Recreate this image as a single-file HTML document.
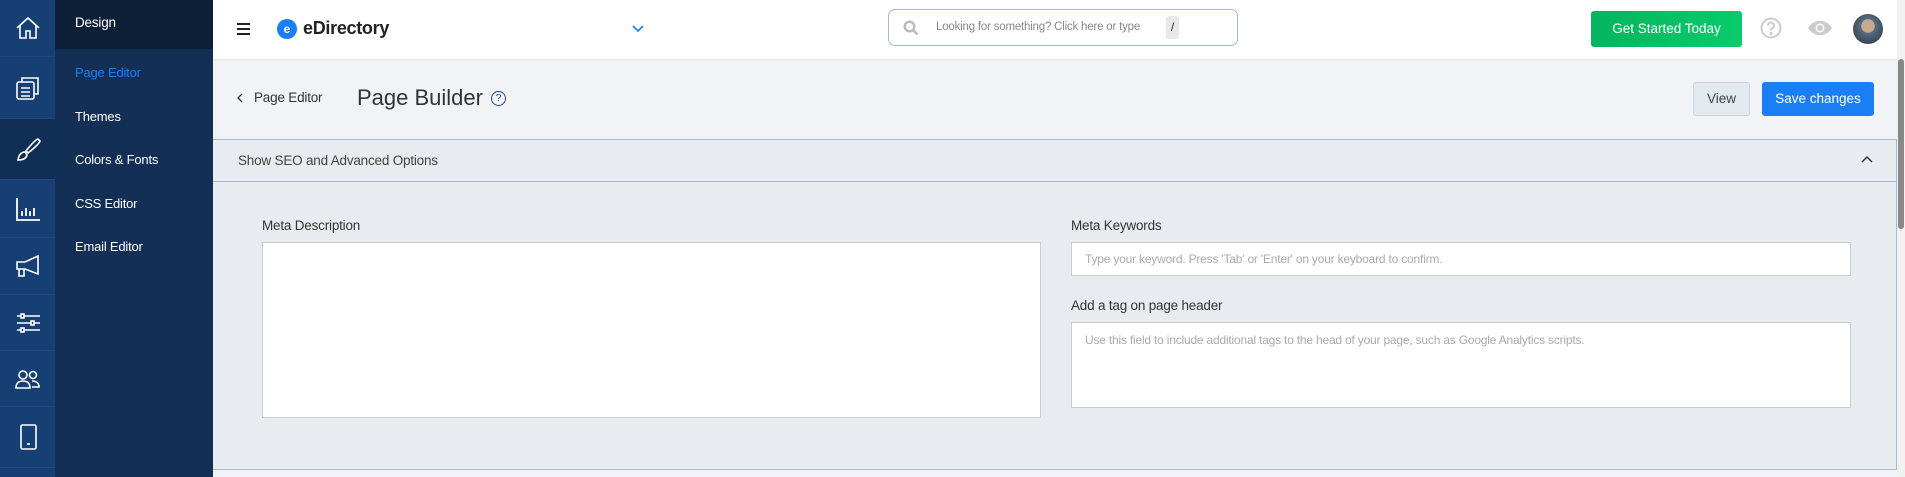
<!DOCTYPE html><html><head><meta charset="utf-8"><style>
*{box-sizing:border-box;margin:0;padding:0}
body{width:1905px;height:477px;overflow:hidden;font-family:"Liberation Sans",sans-serif;background:#f1f3f6;position:relative}
.abs{position:absolute}
#rail{left:0;top:0;width:55px;height:477px;background:#163f73}
.ri{position:absolute;left:0;width:55px;border-bottom:1px solid #1f4a80;display:flex;align-items:center;justify-content:center}
#sub{left:55px;top:0;width:158px;height:477px;background:#132f55}
.si{position:absolute;left:20px;color:#fff;font-size:13px;white-space:nowrap;letter-spacing:-.2px}
#top{left:213px;top:0;width:1692px;height:59px;background:#fff;box-shadow:0 1px 3px rgba(0,0,0,.06)}
.lbl{font-size:13.5px;color:#333;letter-spacing:-.2px}
.box{background:#fff;border:1px solid #c9cdd3}
.ph{font-size:12px;color:#aaa;padding:10px 13px;letter-spacing:-.2px;white-space:nowrap}
</style></head><body>
<div id="rail" class="abs">
<div class="ri" style="top:0;height:57px"><svg width="26" height="26" viewBox="0 0 26 26" fill="none" stroke="#fff" stroke-width="1.6"><path d="M2 13L13 3l11 10M5 11v12h6v-7h4v7h6V11"/></svg></div>
<div class="ri" style="top:57px;height:62px"><svg width="26" height="26" viewBox="0 0 26 26" fill="none" stroke="#fff" stroke-width="1.6"><rect x="2" y="7" width="17" height="17" rx="2"/><path d="M7 7V3h16v16h-4M6 13h9M6 17h9M6 21h9"/></svg></div>
<div class="ri" style="top:119px;height:61px;background:#112e55"><svg width="26" height="26" viewBox="0 0 26 26" fill="none" stroke="#fff" stroke-width="1.6"><path d="M23 3c-2 0-9 8-12 12l2 2c4-3 12-10 12-12zM10 16c-3 0-6 2-7 8 4 0 8-1 9-5z"/></svg></div>
<div class="ri" style="top:180px;height:58px"><svg width="26" height="26" viewBox="0 0 26 26" fill="none" stroke="#fff" stroke-width="1.8"><path d="M2 2v22h23M7 20v-5M11 20v-8M15 20v-5M19 20v-8"/></svg></div>
<div class="ri" style="top:238px;height:57px"><svg width="26" height="26" viewBox="0 0 26 26" fill="none" stroke="#fff" stroke-width="1.6"><path d="M2 9h8l13-6v18L10 16H2zM4 16v7h5v-7"/></svg></div>
<div class="ri" style="top:295px;height:56px"><svg width="26" height="26" viewBox="0 0 26 26" fill="none" stroke="#fff" stroke-width="1.6"><path d="M2 6h23M2 13h23M2 20h23"/><rect x="6" y="4" width="3" height="4" fill="#163f73"/><rect x="16" y="11" width="3" height="4" fill="#163f73"/><rect x="6" y="18" width="3" height="4" fill="#163f73"/></svg></div>
<div class="ri" style="top:351px;height:56px"><svg width="26" height="26" viewBox="0 0 26 26" fill="none" stroke="#fff" stroke-width="1.6"><circle cx="8" cy="9" r="4"/><circle cx="18" cy="9" r="3.5"/><path d="M1 22c0-5 3-7 7-7s7 2 7 7zM17 15c4 0 7 2 7 6h-7"/></svg></div>
<div class="ri" style="top:407px;height:61px"><svg width="26" height="26" viewBox="0 0 26 26" fill="none" stroke="#fff" stroke-width="1.6"><rect x="6" y="1" width="15" height="24" rx="1.5"/><path d="M12 20h3"/></svg></div>
</div>
<div id="sub" class="abs">
<div class="abs" style="left:0;top:0;width:158px;height:49px;background:#0d2038"></div>
<div class="si" style="top:15px;font-size:13.5px">Design</div>
<div class="si" style="top:65px;color:#1a7ff5">Page Editor</div>
<div class="si" style="top:109px">Themes</div>
<div class="si" style="top:152px">Colors &amp; Fonts</div>
<div class="si" style="top:196px">CSS Editor</div>
<div class="si" style="top:239px">Email Editor</div>
</div>
<div id="top" class="abs">
<div class="abs" style="left:24px;top:23px;width:13px;height:2px;background:#222;box-shadow:0 5px 0 #222,0 10px 0 #222"></div>
<div class="abs" style="left:64px;top:19px;width:20px;height:20px;border-radius:50%;background:#1a7ff5;color:#fff;font:bold 12px 'Liberation Sans';text-align:center;line-height:20px">e</div>
<div class="abs" style="left:90px;top:18px;font-size:18px;font-weight:bold;color:#222;letter-spacing:-.3px">eDirectory</div>
<svg class="abs" style="left:419px;top:25px" width="12" height="8" viewBox="0 0 12 8" fill="none" stroke="#1a7ff5" stroke-width="1.6"><path d="M1 1l5 5 5-5"/></svg>
<div class="abs" style="left:675px;top:9px;width:350px;height:37px;border:1px solid #a9b8cc;border-radius:7px">
<svg class="abs" style="left:14px;top:10px" width="16" height="16" viewBox="0 0 16 16" fill="none" stroke="#bbb" stroke-width="2.4"><circle cx="6.5" cy="6.5" r="4.8"/><path d="M10 10l4.5 4.5"/></svg>
<div class="abs" style="left:47px;top:11px;font-size:11.5px;color:#888;letter-spacing:-.2px">Looking for something? Click here or type</div>
<div class="abs" style="left:277px;top:6px;width:13px;height:23px;background:#e8e8e8;border-radius:3px;font-size:12px;text-align:center;line-height:23px;color:#222">/</div>
</div>
<div class="abs" style="left:1378px;top:11px;width:151px;height:36px;background:linear-gradient(90deg,#07b45f,#08cb6b);border-radius:3px;color:#fff;font-size:13.5px;text-align:center;line-height:36px">Get Started Today</div>
<svg class="abs" style="left:1547px;top:17px" width="22" height="22" viewBox="0 0 22 22" fill="none" stroke="#ccc" stroke-width="2"><circle cx="11" cy="11" r="9.5"/><path d="M8 8.5a3 3 0 1 1 4 2.8c-1 .4-1 1-1 2.2" /><circle cx="11" cy="16.5" r=".6" fill="#ccc"/></svg>
<svg class="abs" style="left:1594px;top:20px" width="26" height="16" viewBox="0 0 26 16"><path d="M1 8C5 2 9 1 13 1s8 1 12 7c-4 6-8 7-12 7S5 14 1 8z" fill="#ccc"/><circle cx="13" cy="8" r="4.5" fill="#fff"/><circle cx="13" cy="8" r="3" fill="#ccc"/></svg>
<div class="abs" style="left:1640px;top:14px;width:30px;height:30px;border-radius:50%;background:radial-gradient(circle at 50% 40%,#c9a890 0 28%,#5a6c80 30%,#3a4a5c 70%)"></div>
</div>
<svg class="abs" style="left:237px;top:93px" width="6" height="10" viewBox="0 0 6 10" fill="none" stroke="#333" stroke-width="1.3"><path d="M5 1L1 5l4 4"/></svg>
<div class="abs" style="left:254px;top:90px;font-size:13.5px;color:#333;letter-spacing:-.2px">Page Editor</div>
<div class="abs" style="left:357px;top:85px;font-size:22px;color:#333">Page Builder</div>
<div class="abs" style="left:491px;top:91px;width:15px;height:15px;border:1.3px solid #1e4a7f;border-radius:50%;font-size:10px;color:#1e4a7f;text-align:center;line-height:13px">?</div>
<div class="abs" style="left:1693px;top:82px;width:57px;height:34px;background:#e2e9ef;border:1px solid #ccd3da;border-radius:3px;font-size:13.5px;color:#444;text-align:center;line-height:32px">View</div>
<div class="abs" style="left:1762px;top:82px;width:112px;height:34px;background:#1a7ff5;border-radius:3px;font-size:13.5px;color:#fff;text-align:center;line-height:34px">Save changes</div>
<div class="abs" style="left:213px;top:139px;width:1684px;height:331px;background:#e8ebef;border:1px solid #a9b8cc;border-left:none">
<div class="abs" style="left:0;top:0;width:100%;height:42px;border-bottom:1px solid #a9b8cc"></div>
<div class="abs" style="left:25px;top:13px;font-size:13.5px;color:#444;letter-spacing:-.2px">Show SEO and Advanced Options</div>
<svg class="abs" style="left:1648px;top:15px" width="12" height="8" viewBox="0 0 12 8" fill="none" stroke="#333" stroke-width="1.5"><path d="M1 7l5-5 5 5"/></svg>
</div>
<div class="abs lbl" style="left:262px;top:218px">Meta Description</div>
<div class="abs box" style="left:262px;top:242px;width:779px;height:176px"></div>
<div class="abs lbl" style="left:1071px;top:218px">Meta Keywords</div>
<div class="abs box ph" style="left:1071px;top:242px;width:780px;height:34px;padding-top:9px">Type your keyword. Press 'Tab' or 'Enter' on your keyboard to confirm.</div>
<div class="abs lbl" style="left:1071px;top:298px">Add a tag on page header</div>
<div class="abs box ph" style="left:1071px;top:322px;width:780px;height:86px">Use this field to include additional tags to the head of your page, such as Google Analytics scripts.</div>
<div class="abs" style="left:1897px;top:0;width:8px;height:477px;background:#f1f1f1"></div>
<div class="abs" style="left:1898px;top:59px;width:6px;height:170px;background:#888;border-radius:3px"></div>
</body></html>
